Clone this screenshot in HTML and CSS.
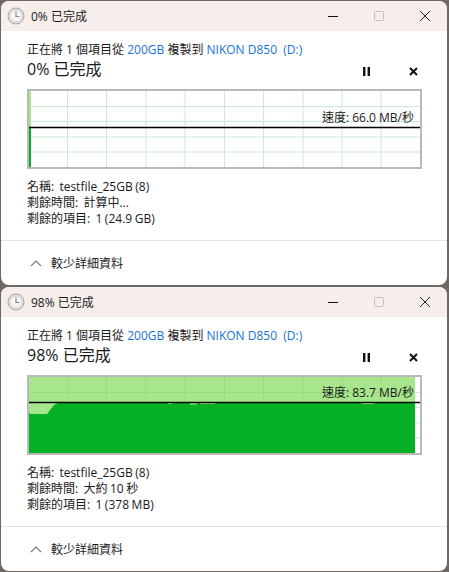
FILE: index.html
```html
<!DOCTYPE html>
<html lang="zh-Hant">
<head>
  <meta charset="UTF-8">
  <title>複製進度</title>
  <link rel="stylesheet" href="styles.css">
</head>

<body>

  <div class="window">
    <div class="titlebar">
      <svg class="clock" width="18" height="18" viewBox="0 0 18 18">
        <circle cx="9" cy="9" r="8" fill="#e9e6e3" stroke="#a5a3a1"/>
        <circle cx="9" cy="9" r="6" fill="#f7f6f5" stroke="#d0cecc"/>
        <path d="M9 4.5V9.5H12.5" fill="none" stroke="#8a8886" stroke-width="1.2"/>
      </svg>
      <span class="title">0% 已完成</span>
      <div class="caption">
        <svg width="12" height="12" viewBox="0 0 12 12"><path d="M1 6.5H11" stroke="#111" stroke-width="1"/></svg>
        <svg width="12" height="12" viewBox="0 0 12 12"><rect x="1.5" y="1.5" width="9" height="9" rx="1" fill="none" stroke="#c4c0bd"/></svg>
        <svg width="12" height="12" viewBox="0 0 12 12"><path d="M1 1L11 11M11 1L1 11" stroke="#222" stroke-width="1"/></svg>
      </div>
    </div>
    <div class="content">
      <div class="copy-line">正在將 1 個項目從 <span class="link">200GB</span> 複製到 <span class="link">NIKON D850&nbsp; (D:)</span></div>
      <div class="progress-row">
        <h1>0% 已完成</h1>
        <div class="controls">
          <svg width="9" height="9" viewBox="0 0 9 9"><path d="M1 0H3.4V9H1ZM5.6 0H8V9H5.6Z" fill="#111"/></svg>
          <svg width="9" height="9" viewBox="0 0 9 9"><path d="M1 1L8 8M8 1L1 8" stroke="#111" stroke-width="2"/></svg>
        </div>
      </div>
      <div class="chart">
        <svg width="391" height="76" viewBox="0 0 391 76">
          <path class="grid" d="M38.5 0V76M77.5 0V76M117 0V76M156 0V76M195.5 0V76M234.5 0V76M274 0V76M313 0V76M352 0V76M0 15.5H391M0 30.5H391M0 46H391M0 61H391"/>
          <rect x="0" y="0" width="2" height="36" fill="#a8e68a"/>
          <rect x="0" y="36" width="2" height="40" fill="#06b025"/>
          <path class="speed-line" d="M0 36.5H391"/>
        </svg>
        <span class="speed speed-low">速度: 66.0 MB/秒</span>
      </div>
      <div class="details">
        <div>名稱: &nbsp;testfile_25GB (8)</div>
        <div>剩餘時間: &nbsp;計算中...</div>
        <div>剩餘的項目: &nbsp;1 (24.9 GB)</div>
      </div>
    </div>
    <div class="footer">
      <svg width="12" height="7" viewBox="0 0 12 7"><path d="M1 6L6 1L11 6" fill="none" stroke="#777" stroke-width="1.1"/></svg>
      <span>較少詳細資料</span>
    </div>
  </div>

  <div class="window">
    <div class="titlebar">
      <svg class="clock" width="18" height="18" viewBox="0 0 18 18">
        <circle cx="9" cy="9" r="8" fill="#e9e6e3" stroke="#a5a3a1"/>
        <circle cx="9" cy="9" r="6" fill="#f7f6f5" stroke="#d0cecc"/>
        <path d="M9 4.5V9.5H12.5" fill="none" stroke="#8a8886" stroke-width="1.2"/>
      </svg>
      <span class="title">98% 已完成</span>
      <div class="caption">
        <svg width="12" height="12" viewBox="0 0 12 12"><path d="M1 6.5H11" stroke="#111" stroke-width="1"/></svg>
        <svg width="12" height="12" viewBox="0 0 12 12"><rect x="1.5" y="1.5" width="9" height="9" rx="1" fill="none" stroke="#c4c0bd"/></svg>
        <svg width="12" height="12" viewBox="0 0 12 12"><path d="M1 1L11 11M11 1L1 11" stroke="#222" stroke-width="1"/></svg>
      </div>
    </div>
    <div class="content">
      <div class="copy-line">正在將 1 個項目從 <span class="link">200GB</span> 複製到 <span class="link">NIKON D850&nbsp; (D:)</span></div>
      <div class="progress-row">
        <h1>98% 已完成</h1>
        <div class="controls">
          <svg width="9" height="9" viewBox="0 0 9 9"><path d="M1 0H3.4V9H1ZM5.6 0H8V9H5.6Z" fill="#111"/></svg>
          <svg width="9" height="9" viewBox="0 0 9 9"><path d="M1 1L8 8M8 1L1 8" stroke="#111" stroke-width="2"/></svg>
        </div>
      </div>
      <div class="chart">
        <svg width="391" height="76" viewBox="0 0 391 76">
          <path class="grid" d="M352 0V76M0 15.5H391M0 30.5H391M0 46H391M0 61H391"/>
          <rect x="0" y="0" width="386" height="37" fill="#a8e68e"/>
          <path class="grid-on-fill" d="M38.5 0V26M77.5 0V26M117 0V26M156 0V26M195.5 0V26M234.5 0V26M274 0V26M313 0V26M352 0V26M0 15.5H386"/>
          <path fill="#06b025" d="M0 36L2 37H18L25 28L29 26H386V76H0Z"/>
          <path fill="#a8e68e" d="M139 26H143V27H139ZM161 26H168V27.5H161ZM171 26H186V27H171ZM333 26H345V27H333Z"/>
          <path class="speed-line" d="M0 25.5H391"/>
        </svg>
        <span class="speed speed-high">速度: 83.7 MB/秒</span>
      </div>
      <div class="details">
        <div>名稱: &nbsp;testfile_25GB (8)</div>
        <div>剩餘時間: &nbsp;大約 10 秒</div>
        <div>剩餘的項目: &nbsp;1 (378 MB)</div>
      </div>
    </div>
    <div class="footer">
      <svg width="12" height="7" viewBox="0 0 12 7"><path d="M1 6L6 1L11 6" fill="none" stroke="#777" stroke-width="1.1"/></svg>
      <span>較少詳細資料</span>
    </div>
  </div>

</body>
</html>
```

FILE: styles.css
```css
html, body {
  height: 100%;
}

body {
  margin: 0;
  padding: 1px;
  box-sizing: border-box;
  display: flex;
  flex-direction: column;
  gap: 2px;
  overflow: hidden;
  background-color: #6d6864;
  font-family: "Open Sans", "Noto Sans CJK TC", sans-serif;
  font-size: 12px;
  color: #1a1a1a;
}

.window {
  width: 446px;
  height: 284px;
  flex: none;
  display: flex;
  flex-direction: column;
  border-radius: 8px;
  overflow: hidden;
  background-color: white;
}

.titlebar {
  height: 30px;
  flex: none;
  display: flex;
  align-items: center;
  padding-left: 6px;
  background-color: #f5eeeb;
}

.title {
  margin-left: 6px;
}

.clock {
  flex: none;
}

.caption {
  margin-left: auto;
  display: flex;
  gap: 34px;
  padding-right: 16px;
}

.content {
  flex: 1;
  padding: 10px 25px 0 26px;
}

.copy-line {
  height: 18px;
  line-height: 18px;
}

.link {
  color: #1a72d6;
}

.progress-row {
  height: 24px;
  display: flex;
  align-items: center;
  justify-content: space-between;
}

h1 {
  margin: 0;
  padding-bottom: 4px;
  font-size: 16px;
  line-height: 20px;
  font-weight: normal;
}

.controls {
  display: flex;
  gap: 38px;
  padding-right: 4px;
}

.chart {
  position: relative;
  width: 391px;
  height: 76px;
  margin-top: 6px;
  border: 2px solid #b8b8b8;
  background: white;
}

.chart svg {
  display: block;
}

.grid {
  fill: none;
  stroke: #c9ead6;
  stroke-width: 1;
}

.grid-on-fill {
  fill: none;
  stroke: #98dc80;
  stroke-width: 1;
}

.speed-line {
  fill: none;
  stroke: #000;
  stroke-width: 1.4;
}

.speed {
  position: absolute;
  right: 6px;
  line-height: 16px;
  white-space: nowrap;
}

.speed-low {
  top: 19px;
}

.speed-high {
  top: 8px;
}

.details {
  margin-top: 10px;
  line-height: 16px;
  word-spacing: -0.5px;
}

.footer {
  height: 44px;
  flex: none;
  display: flex;
  align-items: center;
  gap: 9px;
  padding-left: 29px;
  border-top: 1px solid #e3e3e3;
}
```
